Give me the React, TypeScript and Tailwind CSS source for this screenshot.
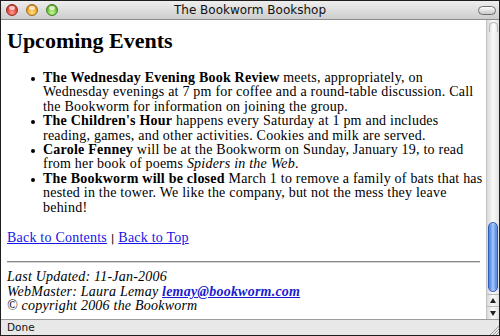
const events = [
  {
    lead: "The Wednesday Evening Book Review",
    body: (
      <>
        {" "}meets, appropriately, on Wednesday evenings at 7 pm for coffee and a round-table discussion. Call the
        Bookworm for information on joining the group.
      </>
    ),
  },
  {
    lead: "The Children's Hour",
    body: (
      <>
        {" "}happens every Saturday at 1 pm and includes reading, games, and other activities. Cookies and milk are
        served.
      </>
    ),
  },
  {
    lead: "Carole Fenney",
    body: (
      <>
        {" "}will be at the Bookworm on Sunday, January 19, to read from her book of poems <i>Spiders in the Web</i>.
      </>
    ),
  },
  {
    lead: "The Bookworm will be closed",
    body: (
      <>
        {" "}March 1 to remove a family of bats that has nested in the tower. We like the company, but not the mess
        they leave behind!
      </>
    ),
  },
];

function Light({ tone }: { tone: "red" | "amber" | "green" }) {
  const fill =
    tone === "red"
      ? "border-[#9a2b22] bg-[radial-gradient(circle_at_50%_75%,#ff9d92_0%,#e5483d_50%,#b3261c_100%)]"
      : tone === "amber"
        ? "border-[#a2671a] bg-[radial-gradient(circle_at_50%_75%,#ffe08a_0%,#f2a92c_50%,#c2760f_100%)]"
        : "border-[#3f7f22] bg-[radial-gradient(circle_at_50%_75%,#c8f79a_0%,#78c63f_50%,#3e8a1c_100%)]";
  return (
    <span className={`relative block h-[12px] w-[12px] rounded-full border ${fill}`}>
      <span className="absolute left-[2px] top-[1px] h-[4px] w-[6px] rounded-full bg-white/70" />
    </span>
  );
}

export default function App() {
  return (
    <div className="flex h-[336px] w-[500px] flex-col overflow-hidden border border-[#1e1e1e] bg-white">
      {/* Title bar */}
      <div className="grid h-[19px] shrink-0 grid-cols-[1fr_auto_1fr] items-center border-b border-[#8c8c8c] bg-gradient-to-b from-[#eeeeee] to-[#cdcdcd]">
        <div className="flex items-center gap-[8px] pl-[5px]">
          <Light tone="red" />
          <Light tone="amber" />
          <Light tone="green" />
        </div>
        <span className="font-['DejaVu_Sans',sans-serif] text-[12px] leading-none text-[#111]">The Bookworm Bookshop</span>
        <div className="flex justify-end pr-[3px]">
          <span className="block h-[9px] w-[18px] rounded-full border border-[#6f6f6f] bg-gradient-to-b from-[#fdfdfd] to-[#c9c9c9]" />
        </div>
      </div>

      {/* Page + scrollbar */}
      <div className="flex min-h-0 flex-1">
        <main className="min-w-0 flex-1 overflow-hidden bg-white pl-[6px] pr-[6px] font-['Liberation_Serif',serif] text-[14px] leading-[14.4px] tracking-[0.22px] text-black">
          <h1 className="mt-[8px] text-[22px] font-bold leading-[26px] tracking-normal">Upcoming Events</h1>

          <ul className="mr-[-4px] mt-[17px]">
            {events.map((e) => (
              <li key={e.lead} className="flex">
                <span className="w-[36px] shrink-0 pl-[24px] pt-[6px]">
                  <span className="block h-[4px] w-[4px] rounded-full bg-black" />
                </span>
                <p className="min-w-0 flex-1">
                  <b>{e.lead}</b>
                  {e.body}
                </p>
              </li>
            ))}
          </ul>

          <p className="mt-[16px]">
            <a href="#" className="text-[#1515e6] underline">Back to Contents</a>
            <span className="font-['DejaVu_Sans',sans-serif] text-[11px]"> | </span>
            <a href="#" className="text-[#1515e6] underline">Back to Top</a>
          </p>

          <div className="mt-[15px] border-y border-t-[#8a8a8a] border-b-[#d4d4d4]" />

          <address className="mt-[7px] italic">
            Last Updated: 11-Jan-2006
            <br />
            WebMaster: Laura Lemay{" "}
            <a href="#" className="font-bold text-[#1a1ad0] underline">lemay@bookworm.com</a>
            <br />© copyright 2006 the Bookworm
          </address>
        </main>

        {/* Scrollbar */}
        <div className="flex w-[13px] shrink-0 flex-col border-l border-[#c4c4c4] bg-gradient-to-r from-[#d9d9d9] via-[#fafafa] to-[#e2e2e2]">
          <div className="mx-auto mt-[2px] h-[10px] w-[9px] rounded-t-full border border-b-0 border-[#b5b5b5] bg-gradient-to-r from-[#e4e4e4] via-white to-[#e8e8e8]" />
          <div className="flex flex-1 flex-col justify-end pb-[2px] pl-[1px]">
            <div className="h-[70px] w-[10px] rounded-full border border-[#2d59b8] bg-gradient-to-r from-[#3a6fd8] via-[#a8cdfa] to-[#3b72da] shadow-[inset_0_0_2px_rgba(255,255,255,0.6)]" />
          </div>
          <div className="flex h-[12px] items-center justify-center border-t border-[#b9b9b9]">
            <svg width="6" height="5" viewBox="0 0 6 5">
              <polygon points="3,0 6,5 0,5" fill="#222" />
            </svg>
          </div>
          <div className="flex h-[13px] items-center justify-center border-t border-[#b9b9b9]">
            <svg width="6" height="5" viewBox="0 0 6 5">
              <polygon points="0,0 6,0 3,5" fill="#222" />
            </svg>
          </div>
        </div>
      </div>

      {/* Status bar */}
      <div className="flex h-[16px] shrink-0 items-center justify-between border-t border-[#9c9c9c] bg-[#e8e8e8] pl-[6px]">
        <span className="font-['DejaVu_Sans',sans-serif] text-[10.5px] leading-none text-[#111]">Done</span>
        <svg width="12" height="12" viewBox="0 0 12 12" className="self-end">
          <line x1="3" y1="12" x2="12" y2="3" stroke="#9a9a9a" />
          <line x1="6" y1="12" x2="12" y2="6" stroke="#9a9a9a" />
          <line x1="9" y1="12" x2="12" y2="9" stroke="#9a9a9a" />
        </svg>
      </div>
    </div>
  );
}
